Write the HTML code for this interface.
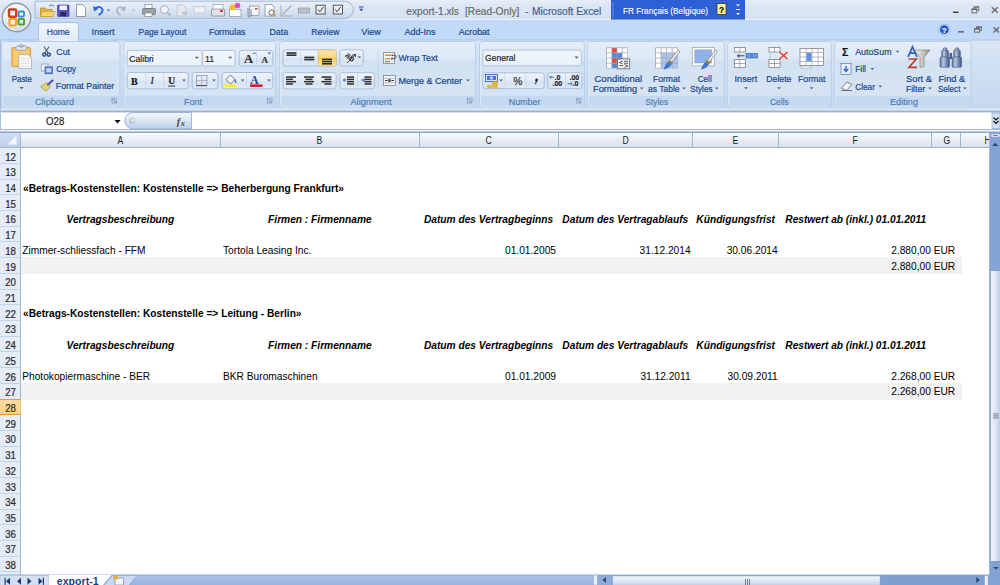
<!DOCTYPE html>
<html><head><meta charset="utf-8"><style>
*{margin:0;padding:0;box-sizing:border-box}
html,body{width:1000px;height:585px;overflow:hidden;background:#fff;font-family:"Liberation Sans",sans-serif}
.a{position:absolute}
.grp{position:absolute;top:41px;height:67px;border:1px solid #b3cbe6;border-radius:3px;background:linear-gradient(#e2ecf8,#d0e0f2 70%)}
.glab{position:absolute;left:0;right:0;bottom:0;height:12px;background:#c2d8f1;color:#3e6aaa;font-size:9.2px;text-align:center;line-height:12px}
.rt{color:#15428b;font-size:8.8px;white-space:nowrap;position:absolute;line-height:11px}
.cell{position:absolute;font-size:10.2px;line-height:15.71px;height:15.71px;white-space:nowrap;color:#000}
.b{font-weight:bold}
.bi{font-weight:bold;font-style:italic}
.rh{position:absolute;left:0;width:21px;background:#e4ecf7;border-right:1px solid #9eb6ce;border-bottom:1px solid #c5d3e6;font-size:10px;color:#2a2a2a;text-align:center;padding-top:1.4px;padding-left:0.5px}
.rh span{display:inline-block;transform:scaleX(0.97);-webkit-text-stroke:0.2px #2a2a2a}
.ch{position:absolute;top:132.8px;height:15px;background:linear-gradient(#f9fbfd,#e4eaf3 60%,#d8e0ec);border-right:1px solid #9eb6ce;border-bottom:1px solid #9eb6ce;font-size:10px;color:#222;text-align:center;line-height:16.1px}
.ch span{display:inline-block;transform:scaleX(0.86)}
</style></head><body>
<svg class="a" style="left:0;top:0;z-index:5" width="1000" height="133" font-family="Liberation Sans"><defs>
<linearGradient id="gTitle" x1="0" y1="0" x2="0" y2="1"><stop offset="0" stop-color="#e7eef8"/><stop offset="0.25" stop-color="#dde7f4"/><stop offset="1" stop-color="#d4e2f3"/></linearGradient>
<linearGradient id="gQat" x1="0" y1="0" x2="0" y2="1"><stop offset="0" stop-color="#e9f0f9"/><stop offset="0.45" stop-color="#dce6f3"/><stop offset="1" stop-color="#c6d5ea"/></linearGradient>
<linearGradient id="gRib" x1="0" y1="0" x2="0" y2="1"><stop offset="0" stop-color="#d8e5f4"/><stop offset="1" stop-color="#c4d8ef"/></linearGradient>
<linearGradient id="gGrp" x1="0" y1="0" x2="0" y2="1"><stop offset="0" stop-color="#e5eef9"/><stop offset="0.25" stop-color="#dce8f6"/><stop offset="0.3" stop-color="#d3e2f3"/><stop offset="1" stop-color="#d6e4f4"/></linearGradient>
<linearGradient id="gBtn" x1="0" y1="0" x2="0" y2="1"><stop offset="0" stop-color="#eef4fb"/><stop offset="0.5" stop-color="#e1ebf7"/><stop offset="0.5" stop-color="#d6e3f3"/><stop offset="1" stop-color="#dfe9f6"/></linearGradient>
<linearGradient id="gCombo" x1="0" y1="0" x2="0" y2="1"><stop offset="0" stop-color="#f3f7fc"/><stop offset="1" stop-color="#e9f0f9"/></linearGradient>
<linearGradient id="gHot" x1="0" y1="0" x2="0" y2="1"><stop offset="0" stop-color="#fde6a5"/><stop offset="0.45" stop-color="#fcd98a"/><stop offset="0.5" stop-color="#fbc75f"/><stop offset="1" stop-color="#fde9a9"/></linearGradient>
<linearGradient id="gTab" x1="0" y1="0" x2="0" y2="1"><stop offset="0" stop-color="#f4f8fd"/><stop offset="1" stop-color="#dfeaf7"/></linearGradient>
<linearGradient id="gFx" x1="0" y1="0" x2="0" y2="1"><stop offset="0" stop-color="#f4f8fc"/><stop offset="0.45" stop-color="#dce7f5"/><stop offset="1" stop-color="#b8cfec"/></linearGradient>
<linearGradient id="gFun" x1="0" y1="0" x2="1" y2="0"><stop offset="0" stop-color="#f4f3ef"/><stop offset="0.55" stop-color="#c9c5bb"/><stop offset="1" stop-color="#8f8b80"/></linearGradient>
<radialGradient id="gOrb" cx="0.5" cy="0.35" r="0.6"><stop offset="0" stop-color="#ffffff"/><stop offset="0.7" stop-color="#eef1f5"/><stop offset="1" stop-color="#c9d0da"/></radialGradient>
</defs>
<rect x="0" y="0" width="1000" height="20" fill="url(#gTitle)"/>
<rect x="0" y="20" width="1000" height="20" fill="#c2daf7"/>
<rect x="0" y="19" width="1000" height="1" fill="#e9f1fb"/>
<path d="M35,1.2 H344.5 A8.8,8.8 0 0 1 344.5,18.8 H35 Z" fill="url(#gQat)" stroke="#a4b7d3" stroke-width="1"/>
<path d="M40.5,8 H45 L46.5,9.5 H52 V16.5 H40.5 Z" fill="#e9b23c" stroke="#a87a1c" stroke-width="0.6"/><path d="M42,11.5 H55 L52.5,16.5 H40.5 Z" fill="#f8d56b" stroke="#b58a2a" stroke-width="0.5"/>
<path d="M49,6 Q52,3.5 54,6.5" stroke="#3d6ac0" stroke-width="0.9" fill="none"/>
<rect x="57.5" y="5" width="11.5" height="11.5" rx="0.8" fill="#5b52c0" stroke="#383088" stroke-width="0.6"/><rect x="59.5" y="5.5" width="7.5" height="4.5" fill="#eef0fb"/><rect x="60.5" y="12" width="5.5" height="4" fill="#2d2a5a"/>
<path d="M76.5,4.5 H82.5 L85.5,7.5 V16.5 H76.5 Z" fill="#fbfbfb" stroke="#6d7584" stroke-width="0.7"/>
<path d="M95,8.5 Q100,5 102.5,9.5 Q103,13 98.5,15" stroke="#2d6ad8" stroke-width="2" fill="none"/><path d="M93,6 L94,11.5 L98.5,9 Z" fill="#2d6ad8"/>
<path d="M106.9,9.4 L110.1,9.4 L108.5,11.200000000000001 Z" fill="#465870"/>
<path d="M124,8.5 Q119,5 117,9.5 Q116.5,13 120.5,15" stroke="#a9b5c6" stroke-width="1.6" fill="none"/><path d="M126,6 L125,11.5 L120.5,9 Z" fill="#a9b5c6"/>
<path d="M131.9,9.4 L135.1,9.4 L133.5,11.200000000000001 Z" fill="#aab4c3"/>
<rect x="145" y="4.5" width="7" height="4" fill="#fff" stroke="#777" stroke-width="0.6"/><rect x="142.5" y="8.5" width="13" height="6" rx="1" fill="#9ba1aa" stroke="#5e636b" stroke-width="0.6"/><rect x="145" y="13" width="7" height="3.5" fill="#fff" stroke="#777" stroke-width="0.6"/>
<circle cx="164.5" cy="9.5" r="4" fill="#f2f4f7" stroke="#a6adb8" stroke-width="1"/><path d="M167.5,12.5 L170.5,15.5" stroke="#a6adb8" stroke-width="1.5"/>
<path d="M177,5 H183 L186,8 V16 H177 Z" fill="#e3e6ea" stroke="#b6bcc6" stroke-width="0.6"/><path d="M181,12 L188,12 L184.5,15.5 Z" fill="#c2c7cf"/>
<rect x="194" y="6.5" width="11" height="6.5" fill="#eef0f3" stroke="#b3b9c3" stroke-width="0.6"/>
<rect x="213" y="4.5" width="10" height="5" fill="#fff" stroke="#8a8f99" stroke-width="0.6"/><rect x="211.5" y="9" width="13" height="7" rx="1" fill="#dfe2e6" stroke="#6c7179" stroke-width="0.6"/><rect x="220" y="10" width="3" height="2" fill="#e8332a"/>
<rect x="229.5" y="9.5" width="11.5" height="7" fill="#fff" stroke="#7b8391" stroke-width="0.6"/><circle cx="232.5" cy="7.5" r="3" fill="#f2c21c"/><circle cx="237.5" cy="5.5" r="2.8" fill="#e04fcf"/>
<rect x="249.5" y="6" width="9.5" height="9.5" fill="#f4f5f7" stroke="#7b8391" stroke-width="0.6"/><path d="M248,8 V15.5 Q248,17 249.5,17 Q251,17 251,15.5 V9" stroke="#6d7aa0" stroke-width="0.9" fill="none"/><rect x="255" y="8" width="2.5" height="1.5" fill="#d9332a"/>
<path d="M265,4.5 H271.5 L274,7 V16 H265 Z" fill="#fbfbfb" stroke="#6d7584" stroke-width="0.6"/><circle cx="271.5" cy="12.5" r="2.6" fill="#fff" stroke="#444" stroke-width="0.8"/><circle cx="274.5" cy="15.5" r="1.2" fill="#e69b27"/>
<path d="M281,5 V16 H293" stroke="#a6acb5" stroke-width="1" fill="none"/><path d="M282.5,14.5 L291.5,5.5" stroke="#a6acb5" stroke-width="1.2"/>
<rect x="298.5" y="8" width="11" height="5" fill="#bfc3c9" stroke="#7e838b" stroke-width="0.6"/>
<rect x="316" y="5.2" width="9.2" height="8.8" fill="#eceef1" stroke="#55595f" stroke-width="1"/><path d="M318,9.5 L319.8,11.8 L323.5,7" stroke="#3a3a3a" stroke-width="1" fill="none"/>
<rect x="333.3" y="5.2" width="9.2" height="8.8" fill="#eceef1" stroke="#55595f" stroke-width="1"/><path d="M335.3,9.5 L337.1,11.8 L340.8,7" stroke="#3a3a3a" stroke-width="1" fill="none"/>
<rect x="359" y="6.5" width="4.5" height="1" fill="#2c4d8c"/>
<path d="M359.09999999999997,8.8 L363.3,8.8 L361.2,11.2 Z" fill="#2c4d8c"/>
<text x="406.3" y="15" font-size="10.20" fill="#6b6b6b" text-anchor="start" font-weight="normal" font-style="normal" stroke="#6b6b6b" stroke-width="0.18" >export-1.xls</text>
<text x="465" y="15" font-size="10.20" fill="#6b6b6b" text-anchor="start" font-weight="normal" font-style="normal" stroke="#6b6b6b" stroke-width="0.18" >[Read-Only]</text>
<text x="525" y="15" font-size="10.20" fill="#6b6b6b" text-anchor="start" font-weight="normal" font-style="normal" stroke="#6b6b6b" stroke-width="0.18" >-</text>
<text x="532" y="15" font-size="10.20" fill="#3f5f8c" text-anchor="start" font-weight="normal" font-style="normal" stroke="#3f5f8c" stroke-width="0.18" textLength="69.30" lengthAdjust="spacingAndGlyphs" >Microsoft Excel</text>
<rect x="611" y="0" width="134" height="19.6" fill="#2d5fd6"/>
<rect x="612" y="2" width="2" height="16" fill="#5b86e6" opacity="0.6"/>
<text x="623" y="13.6" font-size="9.40" fill="#ffffff" text-anchor="start" font-weight="normal" font-style="normal" stroke="#ffffff" stroke-width="0.12" textLength="85.00" lengthAdjust="spacingAndGlyphs" >FR Français (Belgique)</text>
<rect x="717" y="3.5" width="9" height="11" fill="#fff6a0" stroke="#333" stroke-width="0.8"/>
<text x="721.5" y="12.5" font-size="8.50" fill="#000" text-anchor="middle" font-weight="bold" font-style="normal" stroke="#000" stroke-width="0.18" >?</text>
<path d="M736.0,4.4 L740.0,4.4 L738,6.6 Z" fill="#ffffff"/>
<rect x="736" y="9" width="4" height="1" fill="#fff"/>
<path d="M736.0,12.9 L740.0,12.9 L738,15.1 Z" fill="#ffffff"/>
<rect x="953" y="11.6" width="5.5" height="1.4" fill="#3a3a3a"/>
<rect x="974" y="6.8" width="4.8" height="3.8" fill="none" stroke="#707070" stroke-width="0.9"/><rect x="974" y="6.6" width="4.8" height="1.2" fill="#707070"/><rect x="972" y="9" width="4.8" height="3.8" fill="#e0e8f4" stroke="#606060" stroke-width="0.9"/><rect x="972" y="8.8" width="4.8" height="1.2" fill="#606060"/>
<path d="M991.8,7.3 L997.8,12.8 M997.8,7.3 L991.8,12.8" stroke="#666" stroke-width="1.3"/>
<circle cx="944.3" cy="29.7" r="5.6" fill="#d9e6f7" stroke="#8ea6cc" stroke-width="0.7"/>
<circle cx="944.3" cy="29.7" r="4.4" fill="#1f57d6"/>
<text x="944.3" y="32.8" font-size="7.50" fill="#fff" text-anchor="middle" font-weight="bold" font-style="normal" stroke="#fff" stroke-width="0.18" >?</text>
<rect x="958" y="31.2" width="6" height="1.3" fill="#555"/>
<rect x="976.5" y="26.8" width="5" height="3.6" fill="none" stroke="#707070" stroke-width="0.9"/><rect x="976.5" y="26.6" width="5" height="1.2" fill="#707070"/><rect x="974.6" y="28.6" width="5" height="3.6" fill="#c8ddf7" stroke="#606060" stroke-width="0.9"/><rect x="974.6" y="28.4" width="5" height="1.2" fill="#606060"/>
<path d="M993.5,27.2 L999,32.5 M999,27.2 L993.5,32.5" stroke="#666" stroke-width="1.3"/>
<circle cx="16.5" cy="17.5" r="14.2" fill="url(#gOrb)" stroke="#8f98a8" stroke-width="1.4"/>
<circle cx="16.5" cy="17.5" r="12.8" fill="none" stroke="#ffffff" stroke-width="0.9" opacity="0.8"/>
<rect x="9" y="9.5" width="7.2" height="7.2" rx="1" fill="none" stroke="#dd3a1a" stroke-width="2.4"/>
<rect x="18.5" y="11.5" width="5.5" height="5" rx="0.8" fill="none" stroke="#2a8fd8" stroke-width="1.8"/>
<rect x="9.5" y="19" width="6.5" height="6.5" rx="1" fill="none" stroke="#f4a21a" stroke-width="2.2"/>
<rect x="18.5" y="19" width="5.5" height="5.5" rx="0.8" fill="none" stroke="#4aa22a" stroke-width="2"/>
<path d="M38.5,40 V25 Q38.5,22.6 41,22.6 H76 Q78.5,22.6 78.5,25 V40" fill="url(#gTab)" stroke="#a8c2e3" stroke-width="1"/>
<text x="46.8" y="34.6" font-size="9.30" fill="#15428b" text-anchor="start" font-weight="normal" font-style="normal" stroke="#15428b" stroke-width="0.18" textLength="22.80" lengthAdjust="spacingAndGlyphs" >Home</text>
<text x="91.6" y="34.6" font-size="9.30" fill="#15428b" text-anchor="start" font-weight="normal" font-style="normal" stroke="#15428b" stroke-width="0.18" textLength="23.00" lengthAdjust="spacingAndGlyphs" >Insert</text>
<text x="138.5" y="34.6" font-size="9.30" fill="#15428b" text-anchor="start" font-weight="normal" font-style="normal" stroke="#15428b" stroke-width="0.18" textLength="47.80" lengthAdjust="spacingAndGlyphs" >Page Layout</text>
<text x="208.9" y="34.6" font-size="9.30" fill="#15428b" text-anchor="start" font-weight="normal" font-style="normal" stroke="#15428b" stroke-width="0.18" textLength="36.50" lengthAdjust="spacingAndGlyphs" >Formulas</text>
<text x="269.5" y="34.6" font-size="9.30" fill="#15428b" text-anchor="start" font-weight="normal" font-style="normal" stroke="#15428b" stroke-width="0.18" textLength="18.50" lengthAdjust="spacingAndGlyphs" >Data</text>
<text x="311.3" y="34.6" font-size="9.30" fill="#15428b" text-anchor="start" font-weight="normal" font-style="normal" stroke="#15428b" stroke-width="0.18" textLength="28.00" lengthAdjust="spacingAndGlyphs" >Review</text>
<text x="361.3" y="34.6" font-size="9.30" fill="#15428b" text-anchor="start" font-weight="normal" font-style="normal" stroke="#15428b" stroke-width="0.18" textLength="19.50" lengthAdjust="spacingAndGlyphs" >View</text>
<text x="404.5" y="34.6" font-size="9.30" fill="#15428b" text-anchor="start" font-weight="normal" font-style="normal" stroke="#15428b" stroke-width="0.18" textLength="31.00" lengthAdjust="spacingAndGlyphs" >Add-Ins</text>
<text x="458.8" y="34.6" font-size="9.30" fill="#15428b" text-anchor="start" font-weight="normal" font-style="normal" stroke="#15428b" stroke-width="0.18" textLength="30.75" lengthAdjust="spacingAndGlyphs" >Acrobat</text>
<rect x="0" y="40" width="1000" height="70" fill="url(#gRib)"/>
<rect x="0" y="39.5" width="1000" height="1" fill="#a9c3e5"/>
<rect x="78.5" y="39.5" width="1" height="1" fill="none"/>
<rect x="39" y="39" width="39" height="2" fill="#e8f0fa"/>
<rect x="1.8" y="41.5" width="118.2" height="66.3" rx="3" fill="url(#gGrp)" stroke="#b9cee8" stroke-width="1"/>
<path d="M2.3,95.8 H119.5 V105 Q119.5,107.3 117.0,107.3 H4.8 Q2.3,107.3 2.3,105 Z" fill="#c3d9f2"/>
<path d="M2.8,44 V105 Q2.8,106.8 4.8,106.8 H117.0" fill="none" stroke="#f0f6fd" stroke-width="0.6" opacity="0.8"/>
<text x="54.5" y="105" font-size="9.20" fill="#4c73ad" text-anchor="middle" font-weight="normal" font-style="normal" stroke="#4c73ad" stroke-width="0.1" textLength="39.00" lengthAdjust="spacingAndGlyphs" >Clipboard</text>
<rect x="112.0" y="98.5" width="4.5" height="4.5" fill="none" stroke="#7d94b8" stroke-width="0.7"/><path d="M113.0,99.5 L116.2,102.7" stroke="#51698f" stroke-width="0.8"/>
<rect x="124.0" y="41.5" width="151.5" height="66.3" rx="3" fill="url(#gGrp)" stroke="#b9cee8" stroke-width="1"/>
<path d="M124.5,95.8 H275 V105 Q275,107.3 272.5,107.3 H127.0 Q124.5,107.3 124.5,105 Z" fill="#c3d9f2"/>
<path d="M125.0,44 V105 Q125.0,106.8 127.0,106.8 H272.5" fill="none" stroke="#f0f6fd" stroke-width="0.6" opacity="0.8"/>
<text x="193" y="105" font-size="9.20" fill="#4c73ad" text-anchor="middle" font-weight="normal" font-style="normal" stroke="#4c73ad" stroke-width="0.1" textLength="18.00" lengthAdjust="spacingAndGlyphs" >Font</text>
<rect x="267.5" y="98.5" width="4.5" height="4.5" fill="none" stroke="#7d94b8" stroke-width="0.7"/><path d="M268.5,99.5 L271.7,102.7" stroke="#51698f" stroke-width="0.8"/>
<rect x="279.7" y="41.5" width="195.8" height="66.3" rx="3" fill="url(#gGrp)" stroke="#b9cee8" stroke-width="1"/>
<path d="M280.2,95.8 H475 V105 Q475,107.3 472.5,107.3 H282.7 Q280.2,107.3 280.2,105 Z" fill="#c3d9f2"/>
<path d="M280.7,44 V105 Q280.7,106.8 282.7,106.8 H472.5" fill="none" stroke="#f0f6fd" stroke-width="0.6" opacity="0.8"/>
<text x="371" y="105" font-size="9.20" fill="#4c73ad" text-anchor="middle" font-weight="normal" font-style="normal" stroke="#4c73ad" stroke-width="0.1" textLength="41.20" lengthAdjust="spacingAndGlyphs" >Alignment</text>
<rect x="467.5" y="98.5" width="4.5" height="4.5" fill="none" stroke="#7d94b8" stroke-width="0.7"/><path d="M468.5,99.5 L471.7,102.7" stroke="#51698f" stroke-width="0.8"/>
<rect x="479.5" y="41.5" width="104.79999999999995" height="66.3" rx="3" fill="url(#gGrp)" stroke="#b9cee8" stroke-width="1"/>
<path d="M480,95.8 H583.8 V105 Q583.8,107.3 581.3,107.3 H482.5 Q480,107.3 480,105 Z" fill="#c3d9f2"/>
<path d="M480.5,44 V105 Q480.5,106.8 482.5,106.8 H581.3" fill="none" stroke="#f0f6fd" stroke-width="0.6" opacity="0.8"/>
<text x="524.6" y="105" font-size="9.20" fill="#4c73ad" text-anchor="middle" font-weight="normal" font-style="normal" stroke="#4c73ad" stroke-width="0.1" textLength="31.80" lengthAdjust="spacingAndGlyphs" >Number</text>
<rect x="576.3" y="98.5" width="4.5" height="4.5" fill="none" stroke="#7d94b8" stroke-width="0.7"/><path d="M577.3,99.5 L580.5,102.7" stroke="#51698f" stroke-width="0.8"/>
<rect x="587.7" y="41.5" width="136.5999999999999" height="66.3" rx="3" fill="url(#gGrp)" stroke="#b9cee8" stroke-width="1"/>
<path d="M588.2,95.8 H723.8 V105 Q723.8,107.3 721.3,107.3 H590.7 Q588.2,107.3 588.2,105 Z" fill="#c3d9f2"/>
<path d="M588.7,44 V105 Q588.7,106.8 590.7,106.8 H721.3" fill="none" stroke="#f0f6fd" stroke-width="0.6" opacity="0.8"/>
<text x="656.8" y="105" font-size="9.20" fill="#4c73ad" text-anchor="middle" font-weight="normal" font-style="normal" stroke="#4c73ad" stroke-width="0.1" textLength="22.50" lengthAdjust="spacingAndGlyphs" >Styles</text>
<rect x="727.8" y="41.5" width="103.5" height="66.3" rx="3" fill="url(#gGrp)" stroke="#b9cee8" stroke-width="1"/>
<path d="M728.3,95.8 H830.8 V105 Q830.8,107.3 828.3,107.3 H730.8 Q728.3,107.3 728.3,105 Z" fill="#c3d9f2"/>
<path d="M728.8,44 V105 Q728.8,106.8 730.8,106.8 H828.3" fill="none" stroke="#f0f6fd" stroke-width="0.6" opacity="0.8"/>
<text x="779.4" y="105" font-size="9.20" fill="#4c73ad" text-anchor="middle" font-weight="normal" font-style="normal" stroke="#4c73ad" stroke-width="0.1" textLength="18.80" lengthAdjust="spacingAndGlyphs" >Cells</text>
<rect x="834.8" y="41.5" width="136.4000000000001" height="66.3" rx="3" fill="url(#gGrp)" stroke="#b9cee8" stroke-width="1"/>
<path d="M835.3,95.8 H970.7 V105 Q970.7,107.3 968.2,107.3 H837.8 Q835.3,107.3 835.3,105 Z" fill="#c3d9f2"/>
<path d="M835.8,44 V105 Q835.8,106.8 837.8,106.8 H968.2" fill="none" stroke="#f0f6fd" stroke-width="0.6" opacity="0.8"/>
<text x="904" y="105" font-size="9.20" fill="#4c73ad" text-anchor="middle" font-weight="normal" font-style="normal" stroke="#4c73ad" stroke-width="0.1" textLength="28.00" lengthAdjust="spacingAndGlyphs" >Editing</text>
<rect x="11.8" y="47.6" width="18.8" height="19" rx="1.2" fill="#f3c15c" stroke="#c99532" stroke-width="0.8"/>
<rect x="13.5" y="49.5" width="15.5" height="15.5" fill="#f6cc73"/>
<rect x="16" y="46" width="10.4" height="4.2" rx="1" fill="#e4e8ee" stroke="#8a8f99" stroke-width="0.7"/>
<rect x="19" y="44.8" width="4.4" height="2.4" rx="1" fill="none" stroke="#8a8f99" stroke-width="0.7"/>
<path d="M18.7,54.7 H28.2 L31.5,58 V68.4 H18.7 Z" fill="#fbfbfb" stroke="#a0a4ab" stroke-width="0.7"/>
<path d="M20.5,58.5 H29.5 M20.5,61 H29.5 M20.5,63.5 H29.5 M20.5,66 H29.5" stroke="#c9ccd2" stroke-width="0.6"/>
<text x="11.8" y="81.6" font-size="9.20" fill="#15428b" text-anchor="start" font-weight="normal" font-style="normal" stroke="#15428b" stroke-width="0.18" textLength="20.10" lengthAdjust="spacingAndGlyphs" >Paste</text>
<path d="M19.5,87.10000000000001 L23.700000000000003,87.10000000000001 L21.6,89.3 Z" fill="#4f6283"/>
<path d="M44,46.8 L48.5,53.5 M49,46.8 L44.5,53.5" stroke="#555b66" stroke-width="1.1"/>
<circle cx="44.3" cy="54.6" r="2.3" fill="#2f58a8"/><circle cx="48.8" cy="54.6" r="2.3" fill="#2f58a8"/><circle cx="44.3" cy="54.6" r="0.8" fill="#c9d8f0"/><circle cx="48.8" cy="54.6" r="0.8" fill="#c9d8f0"/>
<text x="56.3" y="54.9" font-size="9.20" fill="#15428b" text-anchor="start" font-weight="normal" font-style="normal" stroke="#15428b" stroke-width="0.18" textLength="13.70" lengthAdjust="spacingAndGlyphs" >Cut</text>
<rect x="41.2" y="64" width="6.8" height="7" fill="#e9eef6" stroke="#8b98ae" stroke-width="0.7"/>
<rect x="45" y="66.8" width="7.6" height="7" fill="#6c93d3" stroke="#34589e" stroke-width="0.7"/>
<rect x="46.5" y="68.5" width="4.6" height="3.6" fill="#c9daf3"/>
<text x="56.3" y="71.8" font-size="9.20" fill="#15428b" text-anchor="start" font-weight="normal" font-style="normal" stroke="#15428b" stroke-width="0.18" textLength="19.80" lengthAdjust="spacingAndGlyphs" >Copy</text>
<path d="M40.8,87 L46.5,82.5 L50.5,86.5 L46,91 Z" fill="#e9d66b" stroke="#9c8a2f" stroke-width="0.7"/>
<path d="M48,84.5 L52.5,80.5" stroke="#5a4fb0" stroke-width="2.2" stroke-linecap="round"/>
<text x="55.8" y="89.1" font-size="9.20" fill="#15428b" text-anchor="start" font-weight="normal" font-style="normal" stroke="#15428b" stroke-width="0.18" textLength="58.50" lengthAdjust="spacingAndGlyphs" >Format Painter</text>
<rect x="127.2" y="50.4" width="74.9" height="15.600000000000001" rx="1.5" fill="url(#gCombo)" stroke="#afc3dc" stroke-width="1"/>
<rect x="202.7" y="50.4" width="32.3" height="15.600000000000001" rx="1.5" fill="url(#gCombo)" stroke="#afc3dc" stroke-width="1"/>
<text x="129.3" y="61.5" font-size="9.20" fill="#1d1d1d" text-anchor="start" font-weight="normal" font-style="normal" stroke="#1d1d1d" stroke-width="0.18" textLength="24.50" lengthAdjust="spacingAndGlyphs" >Calibri</text>
<path d="M194.8,56.699999999999996 L198.8,56.699999999999996 L196.8,58.9 Z" fill="#4c607e"/>
<text x="205" y="61.5" font-size="9.20" fill="#3a1d1d" text-anchor="start" font-weight="normal" font-style="normal" stroke="#3a1d1d" stroke-width="0.18" textLength="9.14" lengthAdjust="spacingAndGlyphs" >11</text>
<path d="M228.2,56.699999999999996 L232.2,56.699999999999996 L230.2,58.9 Z" fill="#4c607e"/>
<rect x="239.2" y="50.4" width="33.6" height="15.600000000000001" rx="2.5" fill="url(#gBtn)" stroke="#a9bedb" stroke-width="1"/>
<rect x="256" y="50.5" width="0.8" height="15.5" fill="#c5d5ea"/>
<text x="244" y="63.2" font-size="12.50" fill="#2b2b2b" text-anchor="start" font-weight="bold" font-style="normal" stroke="#2b2b2b" stroke-width="0.18" font-family="Liberation Serif">A</text>
<path d="M252.5,54.3 L254.3,52.5 L256,54.3" fill="none" stroke="#3660b0" stroke-width="0.9"/>
<text x="261.5" y="62.5" font-size="9.00" fill="#2b2b2b" text-anchor="start" font-weight="bold" font-style="normal" stroke="#2b2b2b" stroke-width="0.18" font-family="Liberation Serif">A</text>
<path d="M267.5,52.5 L271.1,52.5 L269.3,54.5 Z" fill="#3660b0"/>
<rect x="127.2" y="72.5" width="61.1" height="16.3" rx="2.5" fill="url(#gBtn)" stroke="#a9bedb" stroke-width="1"/>
<rect x="145.5" y="73" width="0.8" height="15.5" fill="#c5d5ea"/><rect x="163.3" y="73" width="0.8" height="15.5" fill="#c5d5ea"/>
<text x="131" y="84.6" font-size="10.00" fill="#111" text-anchor="start" font-weight="bold" font-style="normal" stroke="#111" stroke-width="0.18" font-family="Liberation Serif">B</text>
<text x="150.5" y="84.4" font-size="10.00" fill="#222" text-anchor="start" font-weight="normal" font-style="italic" stroke="#222" stroke-width="0.18" font-family="Liberation Serif">I</text>
<path d="M149.5,77 L154.5,77" stroke="none"/>
<text x="168.2" y="84" font-size="9.50" fill="#222" text-anchor="start" font-weight="bold" font-style="normal" stroke="#222" stroke-width="0.18" font-family="Liberation Serif">U</text>
<rect x="168.2" y="85.6" width="7" height="0.9" fill="#222"/>
<path d="M182.2,79.5 L185.8,79.5 L184,81.5 Z" fill="#4c607e"/>
<rect x="192.2" y="72.5" width="25.7" height="16.3" rx="2.5" fill="url(#gBtn)" stroke="#a9bedb" stroke-width="1"/>
<rect x="196.5" y="75.5" width="10.5" height="10" fill="none" stroke="#8a93a3" stroke-width="0.8"/><path d="M201.7,75.5 V85.5 M196.5,80.5 H207" stroke="#9ba4b3" stroke-width="0.7"/><rect x="196.5" y="85" width="10.5" height="1.2" fill="#555"/>
<path d="M212.2,79.5 L215.8,79.5 L214,81.5 Z" fill="#4c607e"/>
<rect x="222.1" y="72.5" width="50.7" height="16.3" rx="2.5" fill="url(#gBtn)" stroke="#a9bedb" stroke-width="1"/>
<rect x="246" y="73" width="0.8" height="15.5" fill="#c5d5ea"/>
<path d="M226,79.5 L230.5,75 L235,79.5 L230.5,84 Z" fill="#f2f5f8" stroke="#555" stroke-width="0.8"/><path d="M234.5,79.5 Q236.5,81.5 235.8,83" stroke="#3a6ec7" stroke-width="1.3" fill="none"/>
<rect x="224.3" y="84.5" width="12.3" height="2.3" fill="#fff200"/>
<path d="M240.89999999999998,79.5 L244.5,79.5 L242.7,81.5 Z" fill="#4c607e"/>
<text x="250.3" y="83.6" font-size="11.50" fill="#1e3d8f" text-anchor="start" font-weight="bold" font-style="normal" font-family="Liberation Serif">A</text>
<rect x="250" y="84.5" width="12.5" height="2.3" fill="#e2001a"/>
<path d="M267.2,79.5 L270.8,79.5 L269,81.5 Z" fill="#4c607e"/>
<rect x="283.0" y="49.8" width="53.1" height="16.2" rx="2.5" fill="url(#gBtn)" stroke="#a9bedb" stroke-width="1"/>
<rect x="318.2" y="49.9" width="18" height="16" rx="1.5" fill="url(#gHot)" stroke="#e3b25b" stroke-width="0.6"/>
<rect x="300.3" y="50" width="0.8" height="15.8" fill="#c5d5ea"/>
<rect x="286.5" y="52.2" width="10" height="1.6" fill="#2e2e2e"/>
<rect x="286.5" y="54.4" width="10" height="1.6" fill="#2e2e2e"/>
<rect x="304.3" y="56.6" width="10" height="1.6" fill="#2e2e2e"/>
<rect x="304.3" y="58.8" width="10" height="1.6" fill="#2e2e2e"/>
<rect x="322" y="58.6" width="10" height="1.6" fill="#2e2e2e"/>
<rect x="322" y="60.8" width="10" height="1.6" fill="#2e2e2e"/>
<rect x="322" y="63" width="10" height="1.6" fill="#2e2e2e"/>
<rect x="339.8" y="49.8" width="23.5" height="16.2" rx="2.5" fill="url(#gBtn)" stroke="#a9bedb" stroke-width="1"/>
<text x="0" y="0" font-size="8.5" font-weight="bold" fill="#333" transform="translate(344.5,56) rotate(40)">ab</text><path d="M347,63 L355.5,54.5 M353,54.5 H355.5 V57" stroke="#333" stroke-width="0.9" fill="none"/>
<path d="M357.6,56.3 L361.0,56.3 L359.3,58.3 Z" fill="#4c607e"/>
<rect x="283.0" y="72.7" width="53.1" height="16.2" rx="2.5" fill="url(#gBtn)" stroke="#a9bedb" stroke-width="1"/>
<rect x="286" y="76.3" width="10" height="1.5" fill="#2e2e2e"/>
<rect x="286" y="78.6" width="7" height="1.5" fill="#2e2e2e"/>
<rect x="286" y="80.9" width="10" height="1.5" fill="#2e2e2e"/>
<rect x="286" y="83.2" width="7" height="1.5" fill="#2e2e2e"/>
<rect x="304.0" y="76.3" width="10" height="1.5" fill="#2e2e2e"/>
<rect x="305.5" y="78.6" width="7" height="1.5" fill="#2e2e2e"/>
<rect x="304.0" y="80.9" width="10" height="1.5" fill="#2e2e2e"/>
<rect x="305.5" y="83.2" width="7" height="1.5" fill="#2e2e2e"/>
<rect x="321.5" y="76.3" width="10" height="1.5" fill="#2e2e2e"/>
<rect x="324.5" y="78.6" width="7" height="1.5" fill="#2e2e2e"/>
<rect x="321.5" y="80.9" width="10" height="1.5" fill="#2e2e2e"/>
<rect x="324.5" y="83.2" width="7" height="1.5" fill="#2e2e2e"/>
<rect x="339.8" y="72.7" width="34.7" height="16.2" rx="2.5" fill="url(#gBtn)" stroke="#a9bedb" stroke-width="1"/>
<rect x="357" y="73" width="0.8" height="15.5" fill="#c5d5ea"/>
<rect x="347" y="76.3" width="7" height="1.5" fill="#2e2e2e"/>
<rect x="347" y="78.6" width="7" height="1.5" fill="#2e2e2e"/>
<rect x="347" y="80.9" width="7" height="1.5" fill="#2e2e2e"/>
<rect x="347" y="83.2" width="7" height="1.5" fill="#2e2e2e"/>
<rect x="364.5" y="76.3" width="7" height="1.5" fill="#2e2e2e"/>
<rect x="364.5" y="78.6" width="7" height="1.5" fill="#2e2e2e"/>
<rect x="364.5" y="80.9" width="7" height="1.5" fill="#2e2e2e"/>
<rect x="364.5" y="83.2" width="7" height="1.5" fill="#2e2e2e"/>
<path d="M346.5,80 L343.5,80 M345,78.6 L343.2,80 L345,81.4" stroke="#2f64c8" stroke-width="1" fill="none"/>
<path d="M361,80 L364.5,80 M363,78.6 L364.8,80 L363,81.4" stroke="#2f64c8" stroke-width="1" fill="none"/>
<rect x="377.7" y="49" width="0.8" height="41" fill="#bdd0e8"/>
<rect x="383.5" y="52.5" width="11" height="11" fill="#f6f8fb" stroke="#7d8696" stroke-width="0.8"/><rect x="385" y="54.5" width="8" height="1.5" fill="#d49a3a"/><rect x="385" y="58" width="5" height="1.5" fill="#d49a3a"/><rect x="385" y="61" width="5" height="1.3" fill="#888"/><path d="M392,55.3 H395.5 Q397,57 395,58.7 H391 M392.5,57.5 L391,58.7 L392.5,60" stroke="#333" stroke-width="0.8" fill="none"/>
<text x="398.4" y="61.1" font-size="9.20" fill="#15428b" text-anchor="start" font-weight="normal" font-style="normal" stroke="#15428b" stroke-width="0.18" textLength="39.40" lengthAdjust="spacingAndGlyphs" >Wrap Text</text>
<rect x="383.5" y="75.5" width="12" height="10" fill="#f6f8fb" stroke="#7d8696" stroke-width="0.8"/><path d="M383.5,78.3 H395.5 M383.5,82.7 H395.5" stroke="#8892a2" stroke-width="0.6"/><path d="M385,80.5 H387.5 M391.5,80.5 H394" stroke="#333" stroke-width="1"/><rect x="388" y="79.2" width="3" height="2.6" fill="#555"/>
<text x="398.4" y="84" font-size="9.20" fill="#15428b" text-anchor="start" font-weight="normal" font-style="normal" stroke="#15428b" stroke-width="0.18" textLength="63.60" lengthAdjust="spacingAndGlyphs" >Merge &amp; Center</text>
<path d="M466.2,79.5 L469.8,79.5 L468,81.5 Z" fill="#4c607e"/>
<rect x="482.9" y="50.1" width="98.4" height="15.7" rx="1.5" fill="url(#gCombo)" stroke="#afc3dc" stroke-width="1"/>
<text x="485" y="61.1" font-size="9.20" fill="#1d1d1d" text-anchor="start" font-weight="normal" font-style="normal" stroke="#1d1d1d" stroke-width="0.18" textLength="30.50" lengthAdjust="spacingAndGlyphs" >General</text>
<path d="M574.5,56.5 L578.5,56.5 L576.5,58.7 Z" fill="#4c607e"/>
<rect x="482.9" y="72.8" width="61.3" height="15.8" rx="2.5" fill="url(#gBtn)" stroke="#a9bedb" stroke-width="1"/>
<rect x="504.5" y="73" width="0.8" height="15.5" fill="#c5d5ea"/><rect x="525.5" y="73" width="0.8" height="15.5" fill="#c5d5ea"/>
<rect x="485.5" y="74.5" width="12" height="7" fill="#dbe6f7" stroke="#2c55a8" stroke-width="0.8"/><rect x="487" y="76" width="9" height="4" fill="#4a78cc"/><circle cx="491.5" cy="78" r="1.5" fill="#dbe6f7"/>
<ellipse cx="495" cy="82.5" rx="2.8" ry="1.3" fill="#f2c43a" stroke="#b98310" stroke-width="0.4"/><ellipse cx="495" cy="84.6" rx="2.8" ry="1.3" fill="#f2c43a" stroke="#b98310" stroke-width="0.4"/><ellipse cx="495" cy="86.7" rx="2.8" ry="1.3" fill="#f2c43a" stroke="#b98310" stroke-width="0.4"/><ellipse cx="489.5" cy="86.5" rx="2.6" ry="1.2" fill="#f2c43a" stroke="#b98310" stroke-width="0.4"/>
<path d="M499.2,79.5 L502.8,79.5 L501,81.5 Z" fill="#4c607e"/>
<text x="513.2" y="85" font-size="10.20" fill="#222" text-anchor="start" font-weight="normal" font-style="normal" stroke="#222" stroke-width="0.15" >%</text>
<path d="M535.2,80.2 a1.4,1.4 0 1 1 1.6,1.2 q0,2 -1.8,3.2 l-0.4,-0.5 q1.1,-0.9 1.1,-2 Z" fill="#222"/>
<rect x="547.8" y="72.8" width="34.1" height="15.8" rx="2.5" fill="url(#gBtn)" stroke="#a9bedb" stroke-width="1"/>
<rect x="565" y="73" width="0.8" height="15.5" fill="#c5d5ea"/>
<text x="554.5" y="79.8" font-size="7.31" fill="#222" text-anchor="start" font-weight="bold" font-style="normal" stroke="#222" stroke-width="0.18" textLength="5.84" lengthAdjust="spacingAndGlyphs" >.0</text>
<text x="552.5" y="86.2" font-size="7.31" fill="#222" text-anchor="start" font-weight="bold" font-style="normal" stroke="#222" stroke-width="0.18" textLength="9.73" lengthAdjust="spacingAndGlyphs" >.00</text>
<path d="M549.8,77.2 H554 M551.3,75.8 L549.6,77.2 L551.3,78.6" stroke="#2f64c8" stroke-width="0.9" fill="none"/>
<text x="569.5" y="79.8" font-size="7.31" fill="#222" text-anchor="start" font-weight="bold" font-style="normal" stroke="#222" stroke-width="0.18" textLength="9.73" lengthAdjust="spacingAndGlyphs" >.00</text>
<text x="572.5" y="86.2" font-size="7.31" fill="#222" text-anchor="start" font-weight="bold" font-style="normal" stroke="#222" stroke-width="0.18" textLength="5.84" lengthAdjust="spacingAndGlyphs" >.0</text>
<path d="M567.5,83.8 H572 M570.5,82.4 L572.2,83.8 L570.5,85.2" stroke="#2f64c8" stroke-width="0.9" fill="none"/>
<rect x="606.2" y="47.4" width="21.4" height="21" fill="#a2a9b4"/>
<rect x="607.0" y="48.2" width="4.4" height="4.3" fill="#ffffff"/>
<rect x="607.0" y="53.300000000000004" width="4.4" height="4.3" fill="#ffffff"/>
<rect x="607.0" y="58.400000000000006" width="4.4" height="4.3" fill="#ffffff"/>
<rect x="607.0" y="63.5" width="4.4" height="4.3" fill="#ffffff"/>
<rect x="612.2" y="48.2" width="4.4" height="4.3" fill="#ee4a36"/>
<rect x="612.2" y="53.300000000000004" width="4.4" height="4.3" fill="#4f86dc"/>
<rect x="612.2" y="58.400000000000006" width="4.4" height="4.3" fill="#ee4a36"/>
<rect x="612.2" y="63.5" width="4.4" height="4.3" fill="#4f86dc"/>
<rect x="617.4" y="48.2" width="4.4" height="4.3" fill="#ffffff"/>
<rect x="617.4" y="53.300000000000004" width="4.4" height="4.3" fill="#4f86dc"/>
<rect x="617.4" y="58.400000000000006" width="4.4" height="4.3" fill="#ee4a36"/>
<rect x="617.4" y="63.5" width="4.4" height="4.3" fill="#ffffff"/>
<rect x="622.6" y="48.2" width="4.4" height="4.3" fill="#ffffff"/>
<rect x="622.6" y="53.300000000000004" width="4.4" height="4.3" fill="#ffffff"/>
<rect x="622.6" y="58.400000000000006" width="4.4" height="4.3" fill="#ffffff"/>
<rect x="622.6" y="63.5" width="4.4" height="4.3" fill="#ffffff"/>
<rect x="617.5" y="59" width="12.2" height="9.8" fill="#f2f3f5" stroke="#5e6470" stroke-width="0.8"/>
<path d="M622.5,61 L619.5,62.5 L622.5,64 M624,61.3 H628 M624,63.3 H628 M619.5,65.5 H623 M624.5,64.5 L628,66 L624.5,67.5" stroke="#222" stroke-width="0.7" fill="none"/>
<text x="594.5" y="81.9" font-size="9.20" fill="#15428b" text-anchor="start" font-weight="normal" font-style="normal" stroke="#15428b" stroke-width="0.18" textLength="47.60" lengthAdjust="spacingAndGlyphs" >Conditional</text>
<text x="593" y="91.7" font-size="9.20" fill="#15428b" text-anchor="start" font-weight="normal" font-style="normal" stroke="#15428b" stroke-width="0.18" textLength="44.10" lengthAdjust="spacingAndGlyphs" >Formatting</text>
<path d="M639.9000000000001,87.6 L643.5,87.6 L641.7,89.6 Z" fill="#4c607e"/>
<rect x="655.2" y="47.4" width="22.6" height="21" fill="#a2a9b4"/>
<rect x="656.0" y="48.2" width="4.7" height="4.3" fill="#ffffff"/>
<rect x="656.0" y="53.300000000000004" width="4.7" height="4.3" fill="#ffffff"/>
<rect x="656.0" y="58.400000000000006" width="4.7" height="4.3" fill="#ffffff"/>
<rect x="656.0" y="63.5" width="4.7" height="4.3" fill="#ffffff"/>
<rect x="661.5" y="48.2" width="4.7" height="4.3" fill="#ffffff"/>
<rect x="661.5" y="53.300000000000004" width="4.7" height="4.3" fill="#a9c5f0"/>
<rect x="661.5" y="58.400000000000006" width="4.7" height="4.3" fill="#a9c5f0"/>
<rect x="661.5" y="63.5" width="4.7" height="4.3" fill="#a9c5f0"/>
<rect x="667.0" y="48.2" width="4.7" height="4.3" fill="#ffffff"/>
<rect x="667.0" y="53.300000000000004" width="4.7" height="4.3" fill="#a9c5f0"/>
<rect x="667.0" y="58.400000000000006" width="4.7" height="4.3" fill="#a9c5f0"/>
<rect x="667.0" y="63.5" width="4.7" height="4.3" fill="#a9c5f0"/>
<rect x="672.5" y="48.2" width="4.7" height="4.3" fill="#ffffff"/>
<rect x="672.5" y="53.300000000000004" width="4.7" height="4.3" fill="#a9c5f0"/>
<rect x="672.5" y="58.400000000000006" width="4.7" height="4.3" fill="#a9c5f0"/>
<rect x="672.5" y="63.5" width="4.7" height="4.3" fill="#a9c5f0"/>
<path d="M678.5,51.5 L671,61" stroke="#8c8f94" stroke-width="3" stroke-linecap="round"/><path d="M678.5,51.5 L671,61" stroke="#f0f1f3" stroke-width="1.8" stroke-linecap="round"/><path d="M669.5,60 L673,62.8 L671.5,64.5 L668,61.8 Z" fill="#a27a2c"/><path d="M668,61.8 L671.5,64.5 Q668,69 663.5,69.5 Q664.5,65 668,61.8 Z" fill="#3f76cc"/>
<text x="652.9" y="81.9" font-size="9.20" fill="#15428b" text-anchor="start" font-weight="normal" font-style="normal" stroke="#15428b" stroke-width="0.18" textLength="27.30" lengthAdjust="spacingAndGlyphs" >Format</text>
<text x="648" y="91.7" font-size="9.20" fill="#15428b" text-anchor="start" font-weight="normal" font-style="normal" stroke="#15428b" stroke-width="0.18" textLength="31.50" lengthAdjust="spacingAndGlyphs" >as Table</text>
<path d="M682.2,87.6 L685.8,87.6 L684,89.6 Z" fill="#4c607e"/>
<rect x="692.3" y="47.4" width="22" height="18.5" fill="#ffffff" stroke="#a2a9b4" stroke-width="0.8"/><rect x="694.8" y="49.8" width="17" height="13.2" fill="#8fb2ea" stroke="#a2a9b4" stroke-width="0.6"/>
<path d="M716,51.5 L708.5,61" stroke="#8c8f94" stroke-width="3" stroke-linecap="round"/><path d="M716,51.5 L708.5,61" stroke="#f0f1f3" stroke-width="1.8" stroke-linecap="round"/><path d="M707,60 L710.5,62.8 L709,64.5 L705.5,61.8 Z" fill="#a27a2c"/><path d="M705.5,61.8 L709,64.5 Q705.5,69 701,69.5 Q702,65 705.5,61.8 Z" fill="#3f76cc"/>
<text x="697.7" y="81.9" font-size="9.20" fill="#15428b" text-anchor="start" font-weight="normal" font-style="normal" stroke="#15428b" stroke-width="0.18" textLength="14.00" lengthAdjust="spacingAndGlyphs" >Cell</text>
<text x="690.3" y="91.7" font-size="9.20" fill="#15428b" text-anchor="start" font-weight="normal" font-style="normal" stroke="#15428b" stroke-width="0.18" textLength="22.20" lengthAdjust="spacingAndGlyphs" >Styles</text>
<path d="M714.9000000000001,87.6 L718.5,87.6 L716.7,89.6 Z" fill="#4c607e"/>
<rect x="734.3" y="47.5" width="11" height="4.5" fill="#fff" stroke="#6d7380" stroke-width="0.7"/><path d="M739.8,47.5 V52" stroke="#6d7380" stroke-width="0.6"/>
<rect x="746" y="53.5" width="11.5" height="4.5" fill="#6b98e2" stroke="#3d63a8" stroke-width="0.7"/><path d="M751.7,53.5 V58" stroke="#3d63a8" stroke-width="0.6"/>
<path d="M744.5,55.8 H737.5 M739.5,54.3 L737.4,55.8 L739.5,57.3" stroke="#333" stroke-width="0.9" fill="none"/>
<rect x="734.3" y="59.5" width="11" height="8" fill="#fff" stroke="#6d7380" stroke-width="0.7"/><path d="M739.8,59.5 V67.5 M734.3,63.5 H745.3" stroke="#6d7380" stroke-width="0.6"/>
<text x="734.6" y="82" font-size="9.20" fill="#15428b" text-anchor="start" font-weight="normal" font-style="normal" stroke="#15428b" stroke-width="0.18" textLength="22.70" lengthAdjust="spacingAndGlyphs" >Insert</text>
<path d="M744.1,87.25 L747.9,87.25 L746,89.35 Z" fill="#4c607e"/>
<rect x="769" y="47.5" width="11" height="4.5" fill="#fff" stroke="#6d7380" stroke-width="0.7"/><path d="M774.5,47.5 V52" stroke="#6d7380" stroke-width="0.6"/>
<rect x="769" y="59.5" width="11" height="8" fill="#fff" stroke="#6d7380" stroke-width="0.7"/><path d="M774.5,59.5 V67.5 M769,63.5 H780" stroke="#6d7380" stroke-width="0.6"/>
<path d="M770,53.5 V58" stroke="#aab" stroke-width="0.6"/>
<path d="M779.5,52 L787.5,59 M787.5,52 L779.5,59" stroke="#e8382a" stroke-width="1.4"/>
<text x="766.3" y="82" font-size="9.20" fill="#15428b" text-anchor="start" font-weight="normal" font-style="normal" stroke="#15428b" stroke-width="0.18" textLength="25.10" lengthAdjust="spacingAndGlyphs" >Delete</text>
<path d="M777.1,87.25 L780.9,87.25 L779,89.35 Z" fill="#4c607e"/>
<rect x="800" y="48.5" width="23.5" height="17" fill="#fff" stroke="#6d7380" stroke-width="0.7"/>
<path d="M806,48.5 V65.5 M812,48.5 V65.5 M818,48.5 V65.5 M800,52.5 H823.5 M800,57 H823.5 M800,61.5 H823.5" stroke="#8a909b" stroke-width="0.6"/>
<rect x="806.5" y="53" width="5" height="8" fill="#5f8fe0"/>
<rect x="801" y="66" width="10" height="2" fill="#fff" stroke="#8a909b" stroke-width="0.5"/>
<text x="798" y="82" font-size="9.20" fill="#15428b" text-anchor="start" font-weight="normal" font-style="normal" stroke="#15428b" stroke-width="0.18" textLength="27.50" lengthAdjust="spacingAndGlyphs" >Format</text>
<path d="M809.7,87.25 L813.5,87.25 L811.6,89.35 Z" fill="#4c607e"/>
<text x="842" y="55.5" font-size="10.50" fill="#111" text-anchor="start" font-weight="bold" font-style="normal" stroke="#111" stroke-width="0.18" >Σ</text>
<text x="855.2" y="55.1" font-size="9.20" fill="#15428b" text-anchor="start" font-weight="normal" font-style="normal" stroke="#15428b" stroke-width="0.18" textLength="36.30" lengthAdjust="spacingAndGlyphs" >AutoSum</text>
<path d="M895.7,50.8 L899.3,50.8 L897.5,52.8 Z" fill="#4c607e"/>
<rect x="841" y="63.5" width="10" height="11" fill="#e8eef8" stroke="#5b79ad" stroke-width="0.7"/><path d="M846,66 V71 M843.8,69 L846,71.5 L848.2,69" stroke="#2c64d0" stroke-width="1.4" fill="none"/>
<text x="855.2" y="72.4" font-size="9.20" fill="#15428b" text-anchor="start" font-weight="normal" font-style="normal" stroke="#15428b" stroke-width="0.18" textLength="10.80" lengthAdjust="spacingAndGlyphs" >Fill</text>
<path d="M870.5,68.0 L874.0999999999999,68.0 L872.3,70.0 Z" fill="#4c607e"/>
<path d="M841.5,88 L847,82 L852,84.5 L846.5,90.5 Z" fill="#f3f4f6" stroke="#555" stroke-width="0.7"/><path d="M841.5,90.5 H852" stroke="#555" stroke-width="0.8"/>
<text x="855.2" y="89.7" font-size="9.20" fill="#15428b" text-anchor="start" font-weight="normal" font-style="normal" stroke="#15428b" stroke-width="0.18" textLength="19.80" lengthAdjust="spacingAndGlyphs" >Clear</text>
<path d="M878.5,85.5 L882.0999999999999,85.5 L880.3,87.5 Z" fill="#4c607e"/>
<path d="M914.5,50 H930 L924,57.5 V66.5 L920,67.5 V57.5 Z" fill="url(#gFun)" stroke="#807d73" stroke-width="0.6"/>
<path d="M908,57 L912.5,46.8 L917,57 M909.6,53.2 H915.4" stroke="#2f5db8" stroke-width="1.7" fill="none"/>
<path d="M908.5,59 H916.3 L909,67.3 H917" stroke="#c23a2c" stroke-width="1.7" fill="none"/>
<text x="906" y="81.6" font-size="9.20" fill="#15428b" text-anchor="start" font-weight="normal" font-style="normal" stroke="#15428b" stroke-width="0.18" textLength="25.90" lengthAdjust="spacingAndGlyphs" >Sort &amp;</text>
<text x="905.9" y="91.75" font-size="9.20" fill="#15428b" text-anchor="start" font-weight="normal" font-style="normal" stroke="#15428b" stroke-width="0.18" textLength="19.20" lengthAdjust="spacingAndGlyphs" >Filter</text>
<path d="M928.2,87.6 L931.8,87.6 L930,89.6 Z" fill="#4c607e"/>
<defs><linearGradient id="gBino" x1="0" y1="0" x2="1" y2="0"><stop offset="0" stop-color="#5a6f98"/><stop offset="0.35" stop-color="#b9c7e0"/><stop offset="0.7" stop-color="#7187b3"/><stop offset="1" stop-color="#3e5282"/></linearGradient></defs>
<rect x="943.2" y="47.8" width="3.6" height="2.6" rx="0.8" fill="url(#gBino)" stroke="#41557f" stroke-width="0.4"/>
<rect x="941.6" y="50.2" width="6.8" height="7" rx="1.2" fill="url(#gBino)" stroke="#41557f" stroke-width="0.5"/>
<rect x="940" y="57" width="9.5" height="10.3" rx="1.2" fill="url(#gBino)" stroke="#3a4d78" stroke-width="0.5"/>
<rect x="955.2" y="47.8" width="3.6" height="2.6" rx="0.8" fill="url(#gBino)" stroke="#41557f" stroke-width="0.4"/>
<rect x="953.6" y="50.2" width="6.8" height="7" rx="1.2" fill="url(#gBino)" stroke="#41557f" stroke-width="0.5"/>
<rect x="952" y="57" width="9.5" height="10.3" rx="1.2" fill="url(#gBino)" stroke="#3a4d78" stroke-width="0.5"/>
<rect x="949.5" y="53" width="2.5" height="6" fill="#4b5f8c"/>
<text x="938.4" y="81.6" font-size="9.20" fill="#15428b" text-anchor="start" font-weight="normal" font-style="normal" stroke="#15428b" stroke-width="0.18" textLength="26.90" lengthAdjust="spacingAndGlyphs" >Find &amp;</text>
<text x="937.9" y="91.75" font-size="9.20" fill="#15428b" text-anchor="start" font-weight="normal" font-style="normal" stroke="#15428b" stroke-width="0.18" textLength="22.50" lengthAdjust="spacingAndGlyphs" >Select</text>
<path d="M963.1,87.6 L966.6999999999999,87.6 L964.9,89.6 Z" fill="#4c607e"/>
<rect x="0" y="108.3" width="1000" height="2.2" fill="#dbe7f5"/>
<rect x="0" y="110.5" width="1000" height="1" fill="#97adcc"/>
<rect x="0" y="111.5" width="1000" height="1.1" fill="#6d8dbd"/>
<rect x="0" y="40" width="1" height="93" fill="#a7bedc"/>
<rect x="0" y="112.6" width="1000" height="20.4" fill="#dbe6f4"/>
<rect x="0" y="112.6" width="992" height="16.4" fill="#ffffff"/>
<rect x="0" y="112.6" width="1" height="20" fill="#a9bfd9"/>
<rect x="0" y="129" width="1000" height="1" fill="#a3b9d6"/>
<rect x="0" y="130" width="1000" height="1.6" fill="#f2f6fb"/>
<rect x="0" y="131.6" width="1000" height="1.2" fill="#7f95bd"/>
<text x="55.2" y="124.6" font-size="10.24" fill="#1e1e1e" text-anchor="middle" font-weight="normal" font-style="normal" stroke="#1e1e1e" stroke-width="0.18" textLength="18.40" lengthAdjust="spacingAndGlyphs" >O28</text>
<path d="M114.5,120 H120.5 L117.5,123.5 Z" fill="#000"/>
<path d="M191.5,112.5 H133 A8.25,8.25 0 0 0 133,129 H191.5 Z" fill="url(#gFx)" stroke="#8ea8cc" stroke-width="0.8"/>
<circle cx="132" cy="120.8" r="2.8" fill="#b9bec6"/><circle cx="132.6" cy="120.3" r="1.6" fill="#e9ecf0"/>
<text x="176.8" y="124.8" font-size="10.50" fill="#4a4a4a" text-anchor="start" font-weight="bold" font-style="italic" font-family="Liberation Serif">f</text>
<text x="180.8" y="125.5" font-size="8.50" fill="#4a4a4a" text-anchor="start" font-weight="bold" font-style="italic" font-family="Liberation Serif">x</text>
<rect x="992" y="113" width="8" height="15.5" fill="#d3e0f1" stroke="#9fb4d3" stroke-width="0.8"/>
<path d="M993.5,117.5 L996,120 L998.5,117.5 M993.5,121 L996,123.5 L998.5,121" stroke="#111" stroke-width="1.1" fill="none"/></svg>
<svg class="a" style="left:0;top:132px;z-index:2" width="21" height="16"><defs><linearGradient id="gCorner" x1="0" y1="0" x2="0" y2="1"><stop offset="0" stop-color="#cfdef2"/><stop offset="1" stop-color="#bcd0ec"/></linearGradient></defs><rect x="0" y="0.8" width="20" height="15" fill="url(#gCorner)"/><rect x="20" y="0.8" width="1" height="15" fill="#9eb6ce"/><rect x="0" y="14.8" width="21" height="1" fill="#9eb6ce"/><path d="M16.5,3.5 V12.5 H7.5 Z" fill="#f2f6fb"/></svg>
<div class="ch" style="left:20px;width:201px"><span>A</span></div>
<div class="ch" style="left:221px;width:198.5px"><span>B</span></div>
<div class="ch" style="left:419.5px;width:139.0px"><span>C</span></div>
<div class="ch" style="left:558.5px;width:134.70000000000005px"><span>D</span></div>
<div class="ch" style="left:693.2px;width:86.19999999999993px"><span>E</span></div>
<div class="ch" style="left:779.4px;width:153.0px"><span>F</span></div>
<div class="ch" style="left:932.4px;width:29.0px"><span>G</span></div>
<div class="ch" style="left:961.4px;width:53.10000000000002px"><span>H</span></div>
<div class="rh" style="top:148.20px;height:15.71px;line-height:15.71px;"><span>12</span></div>
<div class="rh" style="top:163.91px;height:15.71px;line-height:15.71px;"><span>13</span></div>
<div class="rh" style="top:179.62px;height:15.71px;line-height:15.71px;"><span>14</span></div>
<div class="rh" style="top:195.33px;height:15.71px;line-height:15.71px;"><span>15</span></div>
<div class="rh" style="top:211.04px;height:15.71px;line-height:15.71px;"><span>16</span></div>
<div class="rh" style="top:226.75px;height:15.71px;line-height:15.71px;"><span>17</span></div>
<div class="rh" style="top:242.46px;height:15.71px;line-height:15.71px;"><span>18</span></div>
<div class="rh" style="top:258.17px;height:15.71px;line-height:15.71px;"><span>19</span></div>
<div class="rh" style="top:273.88px;height:15.71px;line-height:15.71px;"><span>20</span></div>
<div class="rh" style="top:289.59px;height:15.71px;line-height:15.71px;"><span>21</span></div>
<div class="rh" style="top:305.30px;height:15.71px;line-height:15.71px;"><span>22</span></div>
<div class="rh" style="top:321.01px;height:15.71px;line-height:15.71px;"><span>23</span></div>
<div class="rh" style="top:336.72px;height:15.71px;line-height:15.71px;"><span>24</span></div>
<div class="rh" style="top:352.43px;height:15.71px;line-height:15.71px;"><span>25</span></div>
<div class="rh" style="top:368.14px;height:15.71px;line-height:15.71px;"><span>26</span></div>
<div class="rh" style="top:383.85px;height:15.71px;line-height:15.71px;"><span>27</span></div>
<div class="rh" style="top:398.56px;height:16.71px;line-height:15.71px;background:linear-gradient(#fcdca0,#fbd08a);border-right-color:#f5c07a;border-bottom:1px solid #f29436;border-top:1px solid #f29436;"><span>28</span></div>
<div class="rh" style="top:415.27px;height:15.71px;line-height:15.71px;"><span>29</span></div>
<div class="rh" style="top:430.98px;height:15.71px;line-height:15.71px;"><span>30</span></div>
<div class="rh" style="top:446.69px;height:15.71px;line-height:15.71px;"><span>31</span></div>
<div class="rh" style="top:462.40px;height:15.71px;line-height:15.71px;"><span>32</span></div>
<div class="rh" style="top:478.11px;height:15.71px;line-height:15.71px;"><span>33</span></div>
<div class="rh" style="top:493.82px;height:15.71px;line-height:15.71px;"><span>34</span></div>
<div class="rh" style="top:509.53px;height:15.71px;line-height:15.71px;"><span>35</span></div>
<div class="rh" style="top:525.24px;height:15.71px;line-height:15.71px;"><span>36</span></div>
<div class="rh" style="top:540.95px;height:15.71px;line-height:15.71px;"><span>37</span></div>
<div class="rh" style="top:556.66px;height:15.71px;line-height:15.71px;"><span>38</span></div>
<div class="rh" style="top:572.37px;height:5px;border-bottom:none"></div>
<div class="a" style="left:21px;top:257.37px;width:940.5px;height:16.51px;background:#f2f2f2"></div>
<div class="a" style="left:21px;top:383.05px;width:940.5px;height:16.51px;background:#f2f2f2"></div>
<div class="cell b" style="left:23px;top:180.52px">«Betrags-Kostenstellen: Kostenstelle =&gt; Beherbergung Frankfurt»</div>
<div class="cell bi" style="left:-29.599999999999994px;width:300px;text-align:center;top:211.94px">Vertragsbeschreibung</div>
<div class="cell bi" style="left:169.89999999999998px;width:300px;text-align:center;top:211.94px">Firmen : Firmenname</div>
<div class="cell bi" style="left:338.6px;width:300px;text-align:center;top:211.94px">Datum des Vertragbeginns</div>
<div class="cell bi" style="left:475.29999999999995px;width:300px;text-align:center;top:211.94px">Datum des Vertragablaufs</div>
<div class="cell bi" style="left:585.7px;width:300px;text-align:center;top:211.94px">Kündigungsfrist</div>
<div class="cell bi" style="left:705.7px;width:300px;text-align:center;top:211.94px">Restwert ab (inkl.) 01.01.2011</div>
<div class="cell " style="left:22.2px;top:242.86px">Zimmer-schliessfach - FFM</div>
<div class="cell " style="left:223px;top:242.86px">Tortola Leasing Inc.</div>
<div class="cell " style="right:444px;top:242.86px">01.01.2005</div>
<div class="cell " style="right:309.4px;top:242.86px">31.12.2014</div>
<div class="cell " style="right:222.29999999999995px;top:242.86px">30.06.2014</div>
<div class="cell " style="right:44.799999999999955px;top:242.86px">2.880,00 EUR</div>
<div class="cell " style="right:44.799999999999955px;top:258.57px">2.880,00 EUR</div>
<div class="cell b" style="left:23px;top:306.20px">«Betrags-Kostenstellen: Kostenstelle =&gt; Leitung - Berlin»</div>
<div class="cell bi" style="left:-29.599999999999994px;width:300px;text-align:center;top:337.62px">Vertragsbeschreibung</div>
<div class="cell bi" style="left:169.89999999999998px;width:300px;text-align:center;top:337.62px">Firmen : Firmenname</div>
<div class="cell bi" style="left:338.6px;width:300px;text-align:center;top:337.62px">Datum des Vertragbeginns</div>
<div class="cell bi" style="left:475.29999999999995px;width:300px;text-align:center;top:337.62px">Datum des Vertragablaufs</div>
<div class="cell bi" style="left:585.7px;width:300px;text-align:center;top:337.62px">Kündigungsfrist</div>
<div class="cell bi" style="left:705.7px;width:300px;text-align:center;top:337.62px">Restwert ab (inkl.) 01.01.2011</div>
<div class="cell " style="left:22.2px;top:368.54px">Photokopiermaschine - BER</div>
<div class="cell " style="left:223px;top:368.54px">BKR Buromaschinen</div>
<div class="cell " style="right:444px;top:368.54px">01.01.2009</div>
<div class="cell " style="right:309.4px;top:368.54px">31.12.2011</div>
<div class="cell " style="right:222.29999999999995px;top:368.54px">30.09.2011</div>
<div class="cell " style="right:44.799999999999955px;top:368.54px">2.268,00 EUR</div>
<div class="cell " style="right:44.799999999999955px;top:384.25px">2.268,00 EUR</div>
<svg class="a" style="left:0;top:0;z-index:6" width="1000" height="585" font-family="Liberation Sans"><defs><linearGradient id="gVThumb" x1="0" y1="0" x2="1" y2="0"><stop offset="0" stop-color="#f3f6fb"/><stop offset="0.5" stop-color="#dfe7f3"/><stop offset="1" stop-color="#bccbe6"/></linearGradient><linearGradient id="gHThumb" x1="0" y1="0" x2="0" y2="1"><stop offset="0" stop-color="#f5f7fb"/><stop offset="0.5" stop-color="#e2e9f4"/><stop offset="1" stop-color="#bdcbe4"/></linearGradient><linearGradient id="gTabBar" x1="0" y1="0" x2="0" y2="1"><stop offset="0" stop-color="#aec5e8"/><stop offset="1" stop-color="#98b3de"/></linearGradient></defs>
<rect x="989" y="132.5" width="11" height="443" fill="#84a3d5"/>
<rect x="989" y="132.5" width="1" height="443" fill="#9db7e0"/>
<rect x="991" y="134" width="9" height="3" rx="1" fill="#eef3fa" stroke="#7d96bf" stroke-width="0.5"/><rect x="993" y="135.2" width="5" height="0.7" fill="#555"/>
<path d="M992,146 L995.2,142.8 L998.4,146 Z" fill="#2e4670"/>
<rect x="990.3" y="270.5" width="10" height="290.8" fill="url(#gVThumb)" stroke="#6f8dc0" stroke-width="0.6"/>
<rect x="993" y="413.5" width="5.5" height="0.9" fill="#6b7484"/>
<rect x="993" y="415.5" width="5.5" height="0.9" fill="#6b7484"/>
<rect x="993" y="417.5" width="5.5" height="0.9" fill="#6b7484"/>
<path d="M993,566.9 L998.6,566.9 L995.8,569.8 Z" fill="#2e4670"/><rect x="0" y="575" width="989" height="10" fill="url(#gTabBar)"/>
<rect x="0" y="574.6" width="989" height="1" fill="#86a4d3"/>
<rect x="0" y="575.2" width="49" height="10" fill="#d4e0f1" stroke="#9db3d6" stroke-width="0.6"/>
<rect x="4.5" y="577.8" width="1.2" height="7.0" fill="#1b3a7e"/><path d="M10.0,577.8 V584.8 L6.0,581.3 Z" fill="#1b3a7e"/>
<path d="M21,577.8 V584.8 L17,581.3 Z" fill="#1b3a7e"/>
<path d="M27.5,577.8 V584.8 L31.5,581.3 Z" fill="#1b3a7e"/>
<path d="M38.5,577.8 V584.8 L42.5,581.3 Z" fill="#1b3a7e"/><rect x="42.8" y="577.8" width="1.2" height="7.0" fill="#1b3a7e"/>
<path d="M103.5,586 L112.5,575.3 H137.5 L128.5,586 Z" fill="#c8daf3" stroke="#7f9dcb" stroke-width="0.7"/>
<rect x="115" y="578" width="8.5" height="7" fill="#f4f6fa" stroke="#6b7688" stroke-width="0.6"/><circle cx="115.5" cy="577.5" r="2" fill="#f5b72f" stroke="#d48a12" stroke-width="0.5"/>
<path d="M49,575 H112 L102.5,586 H49 Z" fill="#ffffff"/>
<path d="M112,575 L102.5,586" stroke="#8ea8cf" stroke-width="0.8"/>
<text x="56.8" y="585.3" font-size="10.6" font-weight="bold" fill="#1b3f8a">export-1</text>
<rect x="593.5" y="575" width="395.5" height="10" fill="#7f9fd3"/>
<rect x="593.5" y="575" width="4" height="10" fill="#e9eff8" stroke="#8aa0c5" stroke-width="0.5"/>
<rect x="597.5" y="575.5" width="14.5" height="10" fill="#8dabd9"/>
<path d="M606,577 V583 L602.5,580 Z" fill="#2e4670"/>
<rect x="612.3" y="575.8" width="268" height="10" rx="1" fill="url(#gHThumb)" stroke="#6f8dc0" stroke-width="0.6"/>
<rect x="745" y="579" width="0.9" height="6" fill="#6b7484"/>
<rect x="747" y="579" width="0.9" height="6" fill="#6b7484"/>
<rect x="749" y="579" width="0.9" height="6" fill="#6b7484"/>
<path d="M976.3,577 V583 L979.8,580 Z" fill="#2e4670"/>
<rect x="984.6" y="575.5" width="3.5" height="10" fill="#e9eff8" stroke="#8aa0c5" stroke-width="0.5"/>
<rect x="989" y="574.7" width="11" height="11" fill="#84a3d5"/></svg>
</body></html>
